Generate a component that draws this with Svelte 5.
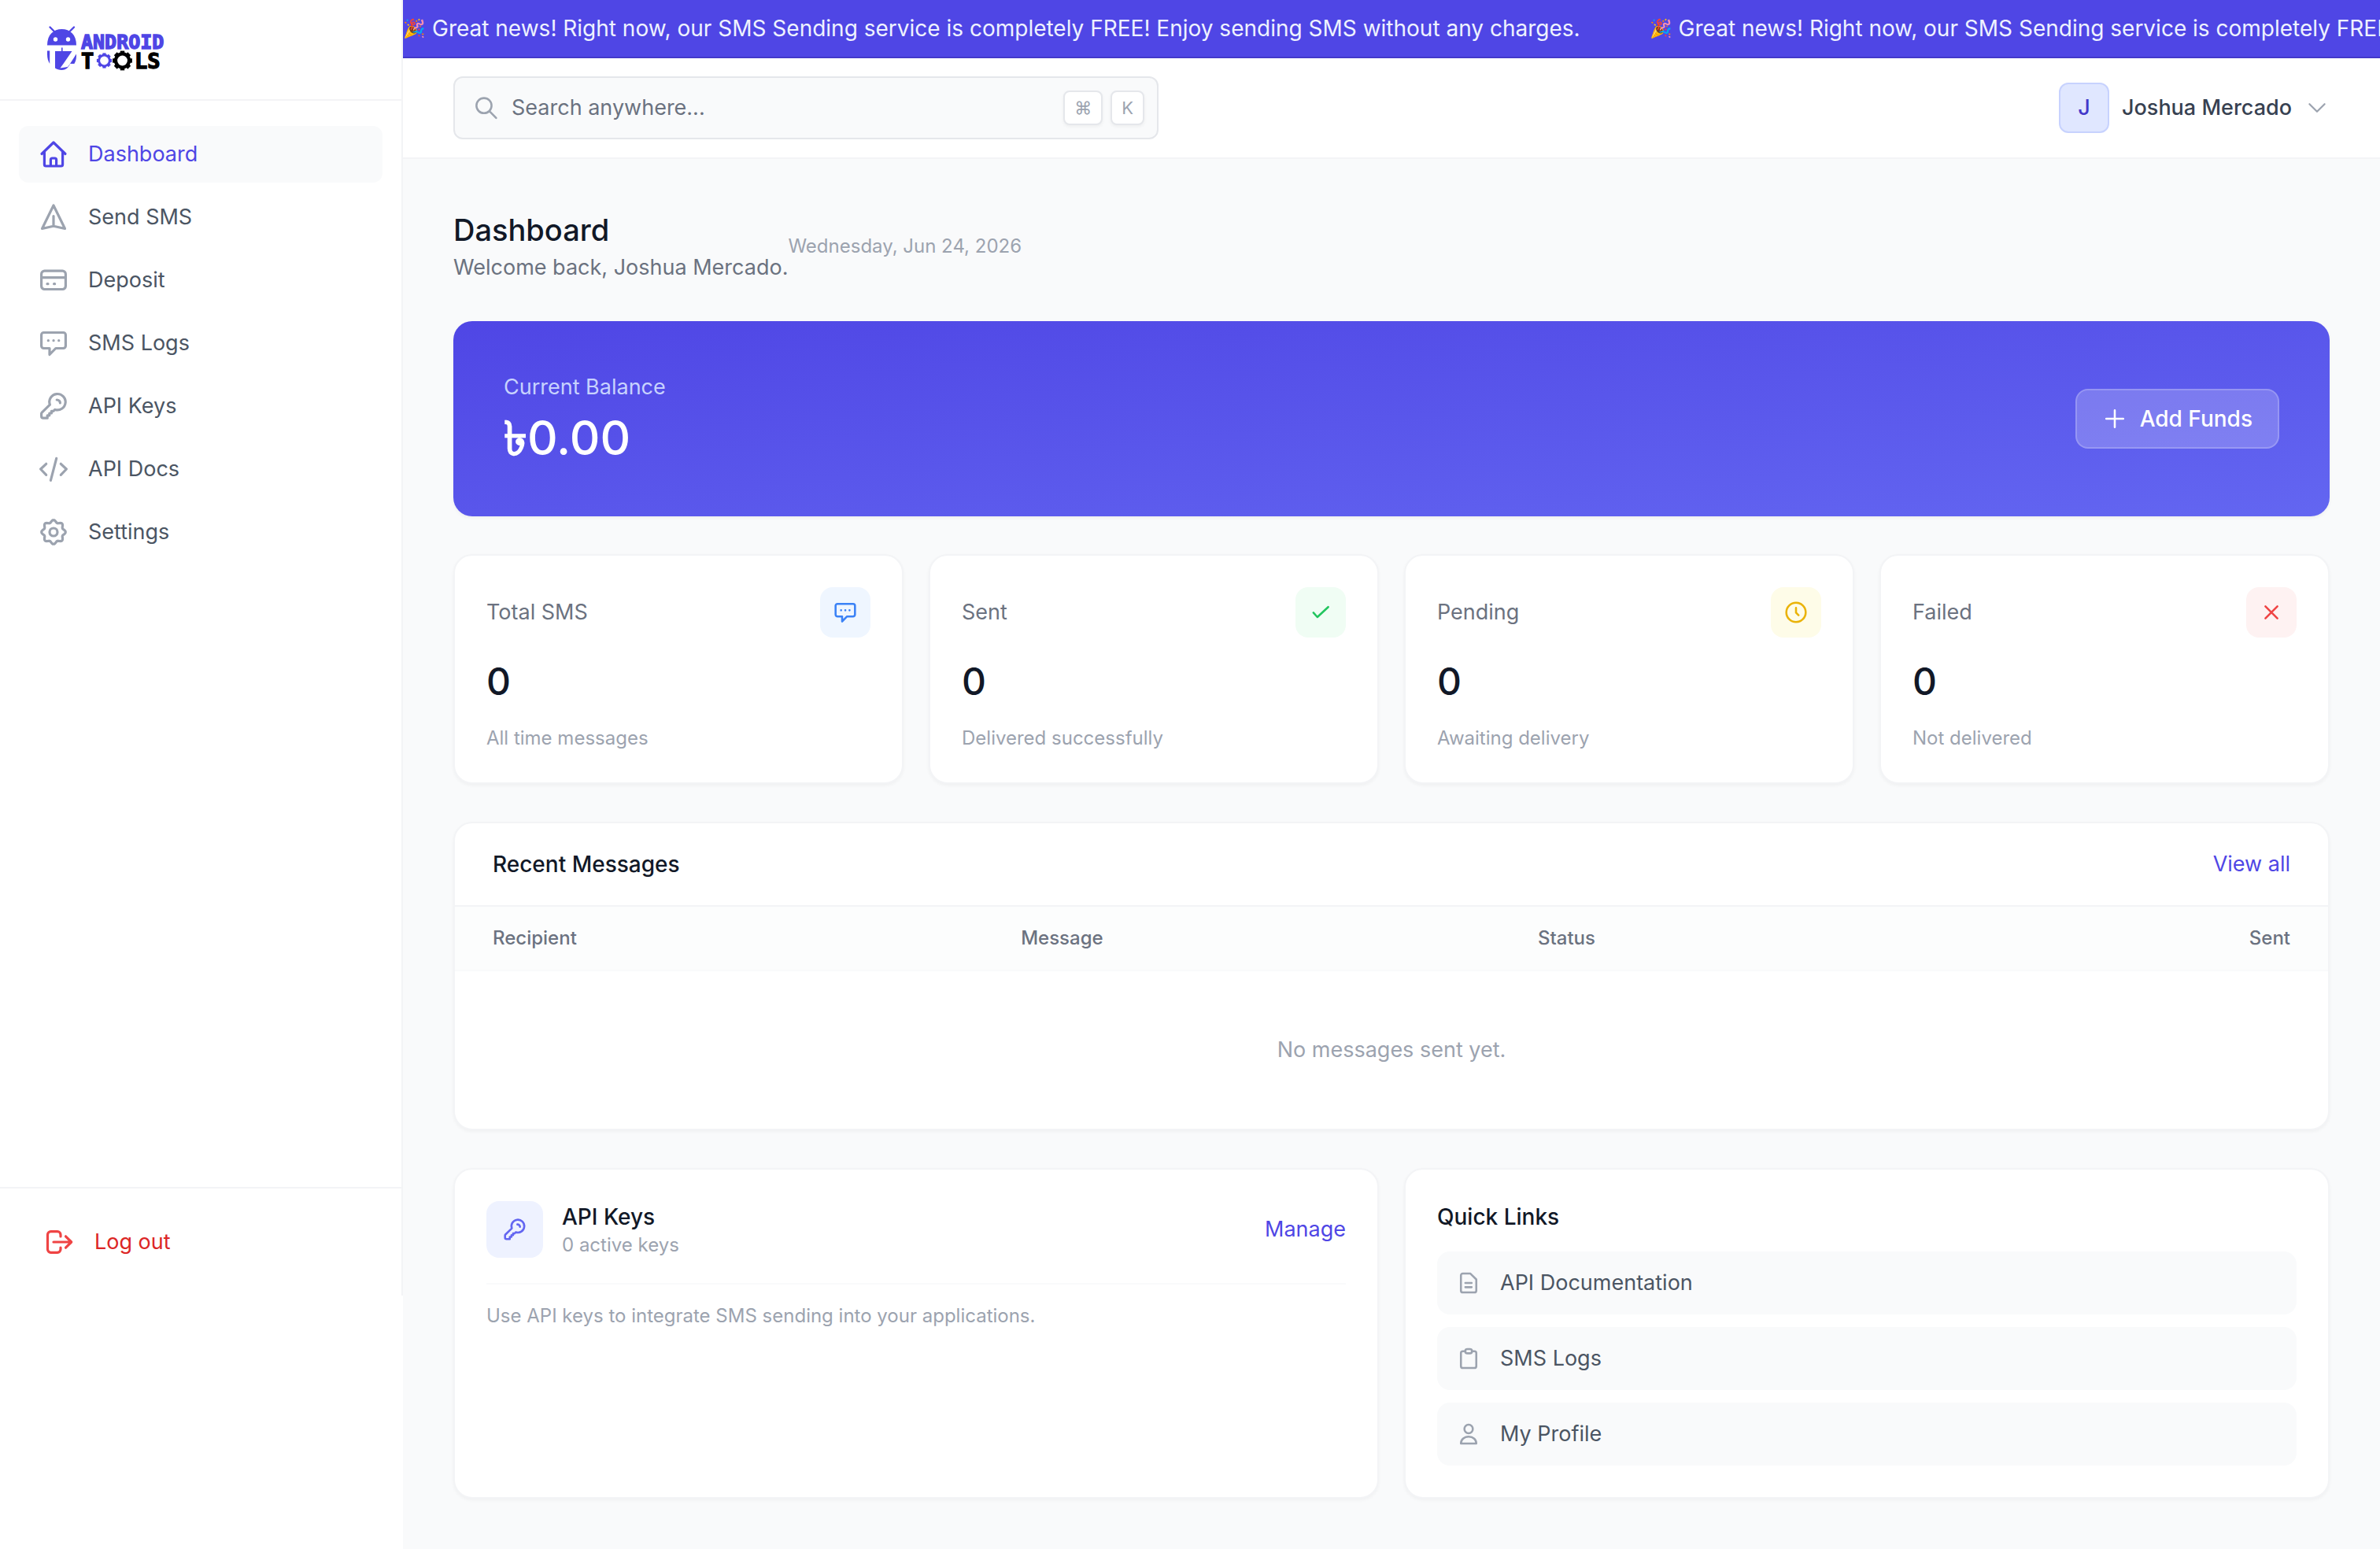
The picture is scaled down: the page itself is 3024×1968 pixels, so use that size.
<script>
  // Wavy outline with eight lobes, used for the settings cog
  const cog = (cx, cy, base, swing) =>
    Array.from({ length: 96 }, (_, i) => {
      const t = (i / 96) * Math.PI * 2;
      const r = base + swing * Math.cos(8 * t);
      return `${(cx + r * Math.cos(t)).toFixed(2)},${(cy + r * Math.sin(t)).toFixed(2)}`;
    }).join(' ');

  const teeth = [0, 45, 90, 135];

  const icons = {
    home: 'M5 19.5 20 5l15 14.5M8.4 17v16a2 2 0 0 0 2 2h19.2a2 2 0 0 0 2-2V17M16.4 35v-8a2 2 0 0 1 2-2h3.2a2 2 0 0 1 2 2v8',
    send: 'M20 5 34.5 34.5 20 31.3 5.5 34.5zM20 18.5v12',
    card: 'M8.6 8.2h22.8a4 4 0 0 1 4 4v15.3a4 4 0 0 1-4 4H8.6a4 4 0 0 1-4-4V12.2a4 4 0 0 1 4-4zM4.6 16.7h30.8M12 24.7h1M20.6 24.7h1',
    chat: 'M7.6 6.5h24.8a3 3 0 0 1 3 3v14a3 3 0 0 1-3 3H22.8L15 34.5v-8H7.6a3 3 0 0 1-3-3v-14a3 3 0 0 1 3-3zM13.3 16.7h.1M20 16.7h.1M26.7 16.7h.1',
    key: 'M15.4 18.2A10.2 10.2 0 1 1 21.8 24.4L19.8 26.4H17.4v2.6h-2.6v2.8h-2.6v3.4H7a2.4 2.4 0 0 1-2.4-2.4v-3.2a2 2 0 0 1 .6-1.5zM24.2 12a4 4 0 0 1 4.2 4',
    code: 'M10.7 13.3 3.6 20l7.1 7.3M29.3 13.3 36.4 20l-7.1 7.3M23.7 6.3l-7.3 28',
    logout: 'M21 13v-2.3a4 4 0 0 0-4-4H8.5a4 4 0 0 0-4 4v18.6a4 4 0 0 0 4 4H17a4 4 0 0 0 4-4V27M12 20h22.5M27.5 12.8 34.7 20l-7.2 7.2',
    check: 'M8.5 20.5 14.8 27.5 32 11.5',
    clock: 'M4.6 20a15.4 15.4 0 1 0 30.8 0a15.4 15.4 0 1 0-30.8 0M20 13v7.5l4 4',
    cross: 'M10.5 10.5l19 19M29.5 10.5 10.5 29.5',
    plus: 'M20 6.5v27M6.5 20h27',
    chevron: 'M8 14l12 12 12-12',
    search: 'M4.2 16.5a12 12 0 1 0 24 0a12 12 0 1 0-24 0M25 25.5l10.5 10.5',
    doc: 'M10.8 4.9h11.7l9.7 9.5v17.7a3 3 0 0 1-3 3H10.8a3 3 0 0 1-3-3V7.9a3 3 0 0 1 3-3zM14.8 20h10M14.8 26.7h10',
    clipboard: 'M15 8.4h-4.2a3 3 0 0 0-3 3v20.7a3 3 0 0 0 3 3h18.4a3 3 0 0 0 3-3V11.4a3 3 0 0 0-3-3H25M18 4.9h4a3 3 0 0 1 0 6.8h-4a3 3 0 0 1 0-6.8z',
    user: 'M13.3 11.9a6.7 6.9 0 1 0 13.4 0a6.7 6.9 0 1 0-13.4 0M7.8 35c0-6 5-11 12.2-11s12.2 5 12.2 11z',
  };

  const nav = [
    { label: 'Dashboard', icon: 'home', active: true },
    { label: 'Send SMS', icon: 'send' },
    { label: 'Deposit', icon: 'card' },
    { label: 'SMS Logs', icon: 'chat' },
    { label: 'API Keys', icon: 'key' },
    { label: 'API Docs', icon: 'code' },
    { label: 'Settings', icon: 'cog' },
  ];

  const stats = [
    { label: 'Total SMS', value: 0, note: 'All time messages', icon: 'chat', tone: 'blue' },
    { label: 'Sent', value: 0, note: 'Delivered successfully', icon: 'check', tone: 'green' },
    { label: 'Pending', value: 0, note: 'Awaiting delivery', icon: 'clock', tone: 'yellow' },
    { label: 'Failed', value: 0, note: 'Not delivered', icon: 'cross', tone: 'red' },
  ];

  const links = [
    { label: 'API Documentation', icon: 'doc' },
    { label: 'SMS Logs', icon: 'clipboard' },
    { label: 'My Profile', icon: 'user' },
  ];

  const user = 'Joshua Mercado';
  const notice =
    'Great news! Right now, our SMS Sending service is completely FREE! Enjoy sending SMS without any charges.';
</script>

{#snippet icon(name)}
  <svg class="icon" viewBox="0 0 40 40" aria-hidden="true">
    {#if name === 'cog'}
      <polygon points={cog(20, 20, 13.8, 1.5)} />
      <circle cx="20" cy="20" r="5" />
    {:else}
      <path d={icons[name]} />
    {/if}
  </svg>
{/snippet}

{#snippet gear(cx, cy, r, hole, tone)}
  <g class={tone}>
    {#each teeth as a}
      <rect x={cx - r} y={cy - r * 0.22} width={r * 2} height={r * 0.44} transform={`rotate(${a} ${cx} ${cy})`} />
    {/each}
    <circle {cx} {cy} r={r * 0.86} />
    <circle {cx} {cy} r={hole} class="hole" />
  </g>
{/snippet}

<div class="app">
  <div class="side">
    <aside>
      <a class="brand" href="#home" aria-label="Android Tools">
        <svg class="logo" viewBox="0 0 160 66">
          <g class="indigo">
            <path d="M2 27.5C2 14 10 7 20.5 7S39 14 39 27.5z" />
            <path d="M5.5 4.5 11 10M36 4.5 30.5 10" class="feeler" />
            <path d="M2 34.5h3.2V51C3 47.5 2 43.5 2 39.5z" />
            <path d="M12 35h8V30.5h1.6V35H33.5L22.5 51H31C29 56 25.5 59 20.5 59C17 59 14 58 12 56.5z" />
            <path d="M39 38.5v3c0 3.5-1 6.5-2.6 9.5H31z" />
          </g>
          <path d="M22.5 51h8.5l-3 4-9.5 1.6z" class="hole" />
          <circle cx="12.5" cy="20" r="2.7" class="hole" />
          <circle cx="28.5" cy="20" r="2.7" class="hole" />
          <text x="45" y="32" class="word blue-word">ANDROID</text>
          <text x="45" y="57" class="word big">T</text>
          {@render gear(74.5, 47, 9.6, 5.4, 'indigo')}
          {@render gear(97.5, 47, 12.4, 6.4, 'black')}
          <text x="113" y="57" class="word big">LS</text>
        </svg>
      </a>
      <nav>
        {#each nav as item}
          <a href="#nav" class:active={item.active}>{@render icon(item.icon)}{item.label}</a>
        {/each}
      </nav>
      <div class="foot">
        <button class="logout">{@render icon('logout')}Log out</button>
      </div>
    </aside>
  </div>

  <div class="page">
    <div class="banner">
      {#each [1, 2] as n (n)}
        <p><span class="party">🎉</span>{notice}</p>
      {/each}
    </div>

    <header>
      <label class="search">
        {@render icon('search')}
        <input type="text" placeholder="Search anywhere..." aria-label="Search anywhere" />
        <kbd>⌘</kbd><kbd>K</kbd>
      </label>
      <button class="account">
        <span class="avatar">J</span>{user}{@render icon('chevron')}
      </button>
    </header>

    <main>
      <div class="title">
        <div>
          <h1>Dashboard</h1>
          <p>Welcome back, {user}.</p>
        </div>
        <time datetime="2026-06-24">Wednesday, Jun 24, 2026</time>
      </div>

      <section class="balance">
        <div>
          <p>Current Balance</p>
          <strong><span class="taka">৳</span>0.00</strong>
        </div>
        <button>{@render icon('plus')}Add Funds</button>
      </section>

      <section class="stats">
        {#each stats as s}
          <article class="card">
            <div class="row">
              <h2>{s.label}</h2>
              <span class="tile {s.tone}">{@render icon(s.icon)}</span>
            </div>
            <p class="value">{s.value}</p>
            <p class="note">{s.note}</p>
          </article>
        {/each}
      </section>

      <section class="card recent">
        <div class="row">
          <h3>Recent Messages</h3>
          <a href="#messages">View all</a>
        </div>
        <table>
          <colgroup><col class="to" /><col class="body" /><col /><col /></colgroup>
          <thead>
            <tr><th>Recipient</th><th>Message</th><th>Status</th><th>Sent</th></tr>
          </thead>
          <tbody>
            <tr><td colspan="4">No messages sent yet.</td></tr>
          </tbody>
        </table>
      </section>

      <section class="bottom">
        <article class="card">
          <div class="row keys">
            <span class="tile indigo-tile">{@render icon('key')}</span>
            <div>
              <h3>API Keys</h3>
              <p class="note">0 active keys</p>
            </div>
            <a href="#keys">Manage</a>
          </div>
          <p class="note hint">Use API keys to integrate SMS sending into your applications.</p>
        </article>
        <article class="card quick">
          <h3>Quick Links</h3>
          <ul>
            {#each links as l}
              <li><a href="#link">{@render icon(l.icon)}{l.label}</a></li>
            {/each}
          </ul>
        </article>
      </section>
    </main>
  </div>
</div>

<style>
  :global(body) {
    background: #f9fafb;
  }
  .app {
    display: flex;
    min-height: 100vh;
    font: 400 27px/40px Inter, 'Noto Sans', sans-serif;
    color: #4b5563;
  }
  .app :is(h1, h2, h3, p, ul) {
    margin: 0;
    padding: 0;
    font-size: 27px;
    font-weight: 400;
  }
  a {
    color: #4f46e5;
    text-decoration: none;
  }
  button {
    display: flex;
    align-items: center;
    font: inherit;
    border: 0;
    background: none;
    cursor: pointer;
  }
  .icon {
    flex: none;
    width: 32px;
    height: 32px;
    fill: none;
    stroke: currentColor;
    stroke-width: 3.2;
    stroke-linecap: round;
    stroke-linejoin: round;
  }

  .side {
    flex: none;
    width: 512px;
    background: #fff;
  }
  aside {
    box-sizing: border-box;
    display: flex;
    flex-direction: column;
    height: calc(100vh - 322px);
    border-right: 2px solid #f3f4f6;
  }
  .brand {
    display: flex;
    align-items: center;
    height: 126px;
    padding-left: 58px;
    border-bottom: 2px solid #f3f4f6;
  }
  .logo {
    overflow: visible;
    width: 160px;
    height: 66px;
  }
  .indigo {
    fill: #4f46e5;
  }
  .hole {
    fill: #fff;
  }
  .feeler {
    stroke: #4f46e5;
    stroke-width: 2.4;
    stroke-linecap: round;
  }
  .word {
    font: 700 25px 'DejaVu Sans Mono', monospace;
    fill: #000;
    stroke: #000;
    stroke-width: 1.4;
  }
  .blue-word {
    fill: #4f46e5;
    stroke: #4f46e5;
  }
  .big {
    font-size: 27px;
  }
  nav {
    display: flex;
    flex: 1;
    flex-direction: column;
    gap: 8px;
    padding: 32px 24px;
  }
  nav a {
    display: flex;
    align-items: center;
    gap: 24px;
    padding: 16px 24px;
    border-radius: 12px;
    color: #4b5563;
  }
  nav .icon,
  .logout .icon {
    width: 40px;
    height: 40px;
  }
  nav a:not(.active) .icon {
    color: #9ca3af;
  }
  nav .active {
    background: #f9fafb;
    color: #4f46e5;
  }
  .foot {
    padding: 32px 24px;
    border-top: 2px solid #f3f4f6;
  }
  .logout {
    gap: 24px;
    width: 100%;
    padding: 16px 32px;
    color: #dc2626;
  }
  .logout .icon {
    color: #ef4444;
  }

  .page {
    flex: 1;
    min-width: 0;
  }
  .banner {
    display: flex;
    gap: 88px;
    overflow: hidden;
    padding: 16px 0;
    border-bottom: 2px solid #4338ca;
    background: #4f46e5;
    color: #eef2ff;
    white-space: nowrap;
  }
  .app .banner p {
    display: flex;
    flex: none;
    gap: 8px;
    font-size: 28px;
  }
  .party {
    font-size: 23px;
  }
  header {
    display: flex;
    align-items: center;
    justify-content: space-between;
    height: 126px;
    padding: 0 64px;
    border-bottom: 2px solid #f3f4f6;
    background: #fff;
  }
  .search {
    box-sizing: border-box;
    display: flex;
    align-items: center;
    gap: 10px;
    width: 100%;
    max-width: 896px;
    height: 80px;
    padding: 0 16px 0 24px;
    border: 2px solid #e5e7eb;
    border-radius: 12px;
    background: #f9fafb;
    color: #9ca3af;
  }
  .search input {
    flex: 1;
    min-width: 0;
    padding: 0 6px;
    border: 0;
    outline: 0;
    background: none;
    font: inherit;
    color: #374151;
  }
  .search input::placeholder {
    color: #6b7280;
    opacity: 1;
  }
  kbd {
    padding: 0 12px;
    border: 2px solid #e5e7eb;
    border-radius: 8px;
    background: #fff;
    box-shadow: 0 2px 4px rgb(0 0 0 / 5%);
    font: 400 22px/40px Inter, 'DejaVu Sans', sans-serif;
  }
  .account {
    gap: 16px;
    padding: 0;
    font-weight: 500;
    color: #374151;
  }
  .account .icon {
    color: #9ca3af;
    stroke-width: 2.8;
  }
  .avatar {
    width: 60px;
    border: 2px solid #c7d2fe;
    border-radius: 12px;
    background: #e0e7ff;
    color: #4338ca;
    line-height: 60px;
    text-align: center;
  }

  main {
    display: flex;
    flex-direction: column;
    gap: 48px;
    padding: 64px;
  }
  .title {
    display: flex;
    align-items: center;
    color: #6b7280;
  }
  .title h1 {
    margin-bottom: 2px;
    font-size: 38px;
    font-weight: 500;
    line-height: 52px;
    color: #111827;
  }
  time,
  .app .note {
    font-size: 24px;
    line-height: 32px;
    color: #9ca3af;
  }
  .balance {
    display: flex;
    align-items: center;
    justify-content: space-between;
    padding: 64px;
    border-radius: 24px;
    background: linear-gradient(to bottom right, #4f46e5, #6366f1);
    box-shadow: 0 2px 4px rgb(0 0 0 / 5%);
    color: #c7d2fe;
  }
  .balance strong {
    display: block;
    margin-top: 8px;
    font-size: 60px;
    font-weight: 500;
    line-height: 72px;
    color: #fff;
  }
  .taka {
    -webkit-text-stroke: 2px #fff;
  }
  .balance button {
    gap: 16px;
    padding: 16px 32px;
    border: 2px solid rgb(255 255 255 / 20%);
    border-radius: 16px;
    background: rgb(255 255 255 / 20%);
    font-size: 28px;
    font-weight: 500;
    color: #fff;
  }
  .card {
    padding: 40px;
    border: 2px solid #f3f4f6;
    border-radius: 24px;
    background: #fff;
    box-shadow: 0 2px 4px rgb(0 0 0 / 4%);
  }
  .row {
    display: flex;
    align-items: center;
    justify-content: space-between;
  }
  .app h3 {
    font-size: 28px;
    font-weight: 500;
    color: #111827;
  }
  .stats {
    display: grid;
    grid-template-columns: repeat(4, 1fr);
    gap: 32px;
  }
  .stats h2 {
    color: #6b7280;
  }
  .app .value {
    margin: 24px 0;
    font-size: 48px;
    font-weight: 500;
    line-height: 64px;
    color: #111827;
  }
  .tile {
    display: grid;
    place-items: center;
    width: 64px;
    height: 64px;
    border-radius: 16px;
  }
  .blue {
    background: #eff6ff;
    color: #3b82f6;
  }
  .green {
    background: #f0fdf4;
    color: #22c55e;
  }
  .yellow {
    background: #fefce8;
    color: #eab308;
  }
  .red {
    background: #fef2f2;
    color: #ef4444;
  }
  .indigo-tile {
    width: 72px;
    height: 72px;
    background: #eef2ff;
    color: #6366f1;
  }
  .recent {
    padding: 0;
    overflow: hidden;
  }
  .recent .row {
    padding: 32px 48px;
    border-bottom: 2px solid #f3f4f6;
  }
  table {
    width: 100%;
    border-collapse: separate;
    border-spacing: 0;
    table-layout: fixed;
  }
  .to {
    width: 28.2%;
  }
  .body {
    width: 27.6%;
  }
  th {
    padding: 24px 48px;
    border-bottom: 2px solid #f9fafb;
    background: #fcfdfd;
    font-size: 24px;
    font-weight: 500;
    line-height: 32px;
    text-align: left;
    color: #6b7280;
  }
  th:last-child {
    text-align: right;
  }
  td {
    padding: 80px 48px;
    text-align: center;
    color: #9ca3af;
  }
  .bottom {
    display: grid;
    grid-template-columns: 1fr 1fr;
    gap: 32px;
  }
  .keys {
    gap: 24px;
    padding-bottom: 32px;
    border-bottom: 2px solid #f9fafb;
  }
  .keys div {
    flex: 1;
  }
  .app .hint {
    margin-top: 24px;
  }
  .app .quick ul {
    display: grid;
    gap: 16px;
    margin-top: 24px;
    list-style: none;
  }
  .quick li a {
    display: flex;
    align-items: center;
    gap: 24px;
    padding: 20px 24px;
    border-radius: 16px;
    background: #f9fafb;
    color: #4b5563;
  }
  .quick .icon {
    color: #9ca3af;
  }
</style>
